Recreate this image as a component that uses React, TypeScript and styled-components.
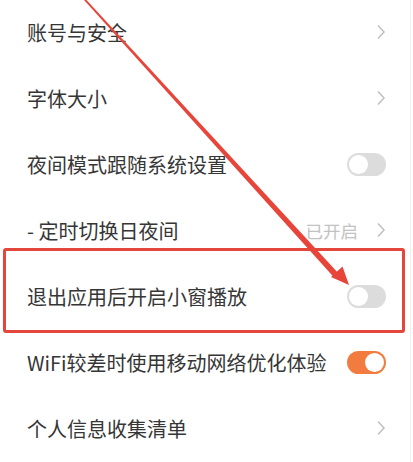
import styled, { createGlobalStyle } from "styled-components";

const GlobalStyle = createGlobalStyle`
  html, body {
    margin: 0;
    padding: 0;
    background: #fff;
  }
  body {
    font-family: "Noto Sans CJK SC", "Noto Sans", sans-serif;
  }
`;

type Item = {
  label: string;
  kind: "link" | "toggle";
  on?: boolean;
  value?: string;
};

const items: Item[] = [
  { label: "账号与安全", kind: "link" },
  { label: "字体大小", kind: "link" },
  { label: "夜间模式跟随系统设置", kind: "toggle", on: false },
  { label: "- 定时切换日夜间", kind: "link", value: "已开启" },
  { label: "退出应用后开启小窗播放", kind: "toggle", on: false },
  { label: "WiFi较差时使用移动网络优化体验", kind: "toggle", on: true },
  { label: "个人信息收集清单", kind: "link" },
];

const Page = () => (
  <Screen>
    <List>
      {items.map((item) => (
        <Row key={item.label}>
          <Label>{item.label}</Label>
          <Trailing>
            {item.value && <Value>{item.value}</Value>}
            {item.kind === "link" ? <Chevron /> : <Switch $on={!!item.on} />}
          </Trailing>
        </Row>
      ))}
    </List>

    {/* annotation drawn over the screenshot */}
    <Highlight />
    <Arrow viewBox="0 0 413 462">
      <polygon points="84,0 86.5,0 339.5,274.5 335,278.5" fill="#e8453a" />
      <polygon points="349,285 342.5,266.5 331,277" fill="#e8453a" />
    </Arrow>
    <EdgeLine />
  </Screen>
);

const Chevron = () => (
  <svg width="10" height="16" viewBox="0 0 10 16">
    <path d="M2 1.5 L8 8 L2 14.5" fill="none" stroke="#bfbfbf" strokeWidth="1.5" />
  </svg>
);

export default function App() {
  return (
    <>
      <GlobalStyle />
      <Page />
    </>
  );
}

const Screen = styled.div`
  position: relative;
  width: 413px;
  height: 462px;
  overflow: hidden;
  background: #fff;
`;

const List = styled.div`
  display: flex;
  flex-direction: column;
  margin-top: -1px;
`;

const Row = styled.div`
  height: 66px;
  display: flex;
  align-items: center;
  justify-content: space-between;
  padding: 0 27px;
  box-sizing: border-box;
`;

const Label = styled.span`
  font-size: 20px;
  color: #363636;
  white-space: nowrap;
`;

const Trailing = styled.div`
  display: flex;
  align-items: center;
  gap: 18px;
`;

const Value = styled.span`
  font-size: 17.5px;
  color: #c2c2c2;
`;

const Switch = styled.div<{ $on: boolean }>`
  position: relative;
  width: 39px;
  height: 23px;
  border-radius: 12px;
  background: ${(p) => (p.$on ? "#f27c3f" : "#dcdcdc")};

  &::after {
    content: "";
    position: absolute;
    top: 2px;
    left: ${(p) => (p.$on ? "18px" : "2px")};
    width: 19px;
    height: 19px;
    border-radius: 50%;
    background: #fff;
  }
`;

const Highlight = styled.div`
  position: absolute;
  left: 3px;
  top: 248px;
  width: 402px;
  height: 85px;
  box-sizing: border-box;
  border: 3px solid #e3473c;
  border-radius: 3px;
  pointer-events: none;
`;

const Arrow = styled.svg`
  position: absolute;
  inset: 0;
  width: 413px;
  height: 462px;
  pointer-events: none;
`;

const EdgeLine = styled.div`
  position: absolute;
  top: 0;
  right: 2px;
  width: 1px;
  height: 100%;
  background: #f0f0f0;
`;
